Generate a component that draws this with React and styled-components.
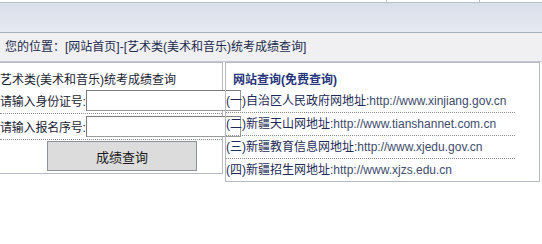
import styled, { createGlobalStyle } from "styled-components";

const GlobalStyle = createGlobalStyle`
    html, body {
        margin: 0;
        padding: 0;
        background: #fff;
        overflow: hidden;
    }
    body {
        font-family: "Liberation Sans", "Noto Sans CJK SC", sans-serif;
        font-size: 12px;
        color: #1c2a4c;
    }
`;

const links = [
    { label: "(一)自治区人民政府网地址:", url: "http://www.xinjiang.gov.cn" },
    { label: "(二)新疆天山网地址:", url: "http://www.tianshannet.com.cn" },
    { label: "(三)新疆教育信息网地址:", url: "http://www.xjedu.gov.cn" },
    { label: "(四)新疆招生网地址:", url: "http://www.xjzs.edu.cn" },
];

const App = () => {
    return (
        <>
            <GlobalStyle />
            <Page>
                <TopStrip>
                    <TabEdge $width={386} $noBorder />
                    <TabEdge $width={92} />
                    <TabEdge $width={5} />
                </TopStrip>
                <Banner />
                <Crumb>您的位置：[网站首页]-[艺术类(美术和音乐)统考成绩查询]</Crumb>
                <Main>
                    <QueryPanel>
                        <PanelTitle>艺术类(美术和音乐)统考成绩查询</PanelTitle>
                        <FormRow>
                            <Label>请输入身份证号:</Label>
                            <TextInput type="text" />
                        </FormRow>
                        <FormRow>
                            <Label>请输入报名序号:</Label>
                            <TextInput type="text" />
                        </FormRow>
                        <ButtonRow>
                            <SubmitButton type="button">成绩查询</SubmitButton>
                        </ButtonRow>
                    </QueryPanel>
                    <LinkPanel>
                        <LinkTitle>网站查询(免费查询)</LinkTitle>
                        <LinkList>
                            {links.map((l) => (
                                <LinkItem key={l.url}>
                                    {l.label}
                                    <Url>{l.url}</Url>
                                </LinkItem>
                            ))}
                        </LinkList>
                    </LinkPanel>
                </Main>
            </Page>
        </>
    );
};

const Page = styled.div`
    width: 542px;
    height: 244px;
    overflow: hidden;
`;

const TopStrip = styled.div`
    display: flex;
    height: 2px;
    border-bottom: 1px solid #b6bdc9;
`;

const TabEdge = styled.div`
    width: ${(p) => p.$width}px;
    height: 100%;
    border-left: ${(p) => (p.$noBorder ? "none" : "1px solid #b6bdc9")};
`;

const Banner = styled.div`
    height: 29px;
    background: linear-gradient(to bottom, #d9dfe9, #e6e9f1);
    border-bottom: 1px solid #a6afbd;
`;

const Crumb = styled.div`
    height: 28px;
    line-height: 28px;
    padding-left: 5px;
    background: #f0f0f2;
    border-bottom: 1px solid #c3c8d0;
    color: #1d2b4c;
    white-space: nowrap;
`;

const Main = styled.div`
    display: flex;
    align-items: flex-start;
    gap: 2px;
`;

const QueryPanel = styled.div`
    width: 223px;
    box-sizing: border-box;
    border: 1px solid #b3bac6;
    border-left: none;
    color: #1a1d33;
`;

const PanelTitle = styled.div`
    height: 25px;
    box-sizing: border-box;
    padding-top: 8px;
    line-height: 18px;
    white-space: nowrap;
`;

const FormRow = styled.div`
    display: flex;
    align-items: center;
    height: 25px;
    border-bottom: 1px dotted #8a8a8a;
    white-space: nowrap;
`;

const Label = styled.span`
    width: 86px;
    flex: none;
    letter-spacing: -0.2px;
`;

const TextInput = styled.input`
    flex: none;
    width: 155px;
    height: 21px;
    box-sizing: border-box;
    margin: 0;
    padding: 0 2px;
    border: 1px solid #9a9a9a;
    border-top-color: #7a7a7a;
    border-left-color: #7a7a7a;
    background: #fff;
    font: inherit;
`;

const ButtonRow = styled.div`
    padding: 1px 0 2px 47px;
`;

const SubmitButton = styled.button`
    display: block;
    width: 150px;
    height: 30px;
    margin: 0;
    padding: 0;
    background: #dcdcdc;
    border: 1px solid #8e9299;
    font-family: "Liberation Sans", "Noto Sans CJK SC", sans-serif;
    font-size: 13px;
    color: #1a1a1a;
`;

const LinkPanel = styled.div`
    width: 315px;
    height: 120px;
    box-sizing: border-box;
    border: 1px solid #b3bac6;
`;

const LinkTitle = styled.div`
    height: 27px;
    box-sizing: border-box;
    padding: 9px 0 0 7px;
    line-height: 16px;
    font-weight: bold;
    color: #27357a;
    white-space: nowrap;
`;

const LinkList = styled.ul`
    width: 289px;
    margin: 0;
    padding: 0;
    list-style: none;
`;

const LinkItem = styled.li`
    height: 22px;
    line-height: 22px;
    border-bottom: 1px dotted #8a8a8a;
    color: #1c2a55;
    white-space: nowrap;
    &:last-child {
        border-bottom: none;
    }
`;

const Url = styled.span`
    color: #3d4b6c;
`;

export default App;
